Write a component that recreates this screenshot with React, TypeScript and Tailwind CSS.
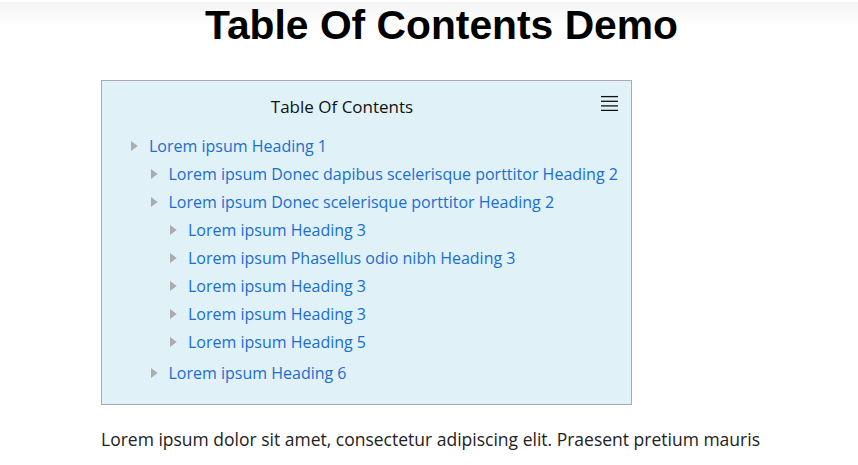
import React from "react";

type Item = { text: string; children?: Item[] };

const toc: Item[] = [
  {
    text: "Lorem ipsum Heading 1",
    children: [
      { text: "Lorem ipsum Donec dapibus scelerisque porttitor Heading 2" },
      {
        text: "Lorem ipsum Donec scelerisque porttitor Heading 2",
        children: [
          { text: "Lorem ipsum Heading 3" },
          { text: "Lorem ipsum Phasellus odio nibh Heading 3" },
          { text: "Lorem ipsum Heading 3" },
          { text: "Lorem ipsum Heading 3" },
          { text: "Lorem ipsum Heading 5" },
        ],
      },
      { text: "Lorem ipsum Heading 6" },
    ],
  },
];

function Arrow() {
  return (
    <svg width="7" height="10" viewBox="0 0 7 10" className="shrink-0 block">
      <polygon points="0,0 6.7,5 0,10" fill="#acacac" />
    </svg>
  );
}

function Tree({ items, depth }: { items: Item[]; depth: number }) {
  const cls = depth === 0 ? "" : depth === 1 ? "pl-[19.5px]" : "pl-[19.5px] mb-[3px]";
  return (
    <ul className={cls}>
      {items.map((it, i) => (
        <li key={i}>
          <div className="flex items-center h-[28px]">
            <Arrow />
            <a className="ml-[11px] text-[#1b6dd1] whitespace-nowrap leading-[28px]">{it.text}</a>
          </div>
          {it.children && <Tree items={it.children} depth={depth + 1} />}
        </li>
      ))}
    </ul>
  );
}

function Hamburger() {
  return (
    <svg width="17" height="16" viewBox="0 0 17 16" className="block">
      <g stroke="#111" strokeWidth="1.3">
        <line x1="0" y1="1.6" x2="17" y2="1.6" />
        <line x1="0" y1="6.3" x2="17" y2="6.3" />
        <line x1="0" y1="10.9" x2="17" y2="10.9" />
        <line x1="0" y1="15.4" x2="17" y2="15.4" />
      </g>
    </svg>
  );
}

export default function App() {
  return (
    <div className="min-h-[465px] bg-[linear-gradient(to_bottom,#ffffff_0px,#ffffff_2px,#f4f4f4_2px,#ffffff_26px)] pl-[101px] font-['Open_Sans',sans-serif]">
      <div className="w-[681px]">
        <h1 className="pt-px h-[49px] text-center font-['Liberation_Sans',Arial,sans-serif] font-bold text-[40.8px] leading-[48px] text-black">
          Table Of Contents Demo
        </h1>
        <div className="mt-[31px] w-[531px] border border-[#aaaaaa] bg-[#e0f1f8] pt-[13px] pb-[17px]">
          <div className="flex h-[24px]">
            <p className="flex-1 pt-px text-center text-[17px] leading-[24px] text-[#111111]">Table Of Contents</p>
            <div className="ml-[19px] mr-[13px] w-[17px] pt-[1px]">
              <Hamburger />
            </div>
          </div>
          <nav className="mt-[14px] pl-[29px] text-[16px]">
            <Tree items={toc} depth={0} />
          </nav>
        </div>
        <p className="mt-[20px] text-[17.5px] leading-[28px] text-[#222222] whitespace-nowrap">
          Lorem ipsum dolor sit amet, consectetur adipiscing elit. Praesent pretium mauris
        </p>
      </div>
    </div>
  );
}
